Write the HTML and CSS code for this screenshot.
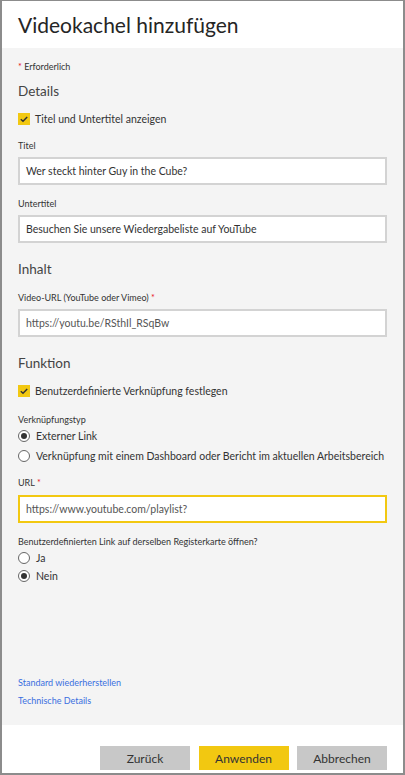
FILE: index.html
```html
<!DOCTYPE html>
<html lang="de">
<head>
<meta charset="utf-8">
<title>Videokachel hinzufügen</title>
<link rel="stylesheet" href="styles.css">
</head>
<body>
<div class="dialog">
  <header class="header">
    <h1 class="title">Videokachel hinzufügen</h1>
  </header>
  <main class="content">
    <div class="required"><span class="star">*</span> Erforderlich</div>

    <h2 class="section first">Details</h2>
    <label class="check">
      <span class="box"><svg viewBox="0 0 12 12" width="12" height="12"><path d="M2.8 6.2 L5 8.2 L9.2 4" fill="none" stroke="#333" stroke-width="1.5"/></svg></span>
      <span>Titel und Untertitel anzeigen</span>
    </label>
    <div class="label">Titel</div>
    <div class="field">Wer steckt hinter Guy in the Cube?</div>
    <div class="label">Untertitel</div>
    <div class="field">Besuchen Sie unsere Wiedergabeliste auf YouTube</div>

    <h2 class="section">Inhalt</h2>
    <div class="label">Video-URL (YouTube oder Vimeo) <span class="star">*</span></div>
    <div class="field url">https://youtu.be/RSthIl_RSqBw</div>

    <h2 class="section">Funktion</h2>
    <label class="check">
      <span class="box"><svg viewBox="0 0 12 12" width="12" height="12"><path d="M2.8 6.2 L5 8.2 L9.2 4" fill="none" stroke="#333" stroke-width="1.5"/></svg></span>
      <span>Benutzerdefinierte Verknüpfung festlegen</span>
    </label>
    <div class="label label-gap">Verknüpfungstyp</div>
    <div class="radio first-radio"><span class="circle on"></span><span>Externer Link</span></div>
    <div class="radio spaced"><span class="circle"></span><span>Verknüpfung mit einem Dashboard oder Bericht im aktuellen Arbeitsbereich</span></div>
    <div class="label">URL <span class="star">*</span></div>
    <div class="field url focus">https://www.youtube.com/playlist?</div>
    <div class="label">Benutzerdefinierten Link auf derselben Registerkarte öffnen?</div>
    <div class="radio first-radio"><span class="circle"></span><span>Ja</span></div>
    <div class="radio"><span class="circle on"></span><span>Nein</span></div>

    <div class="links">
      <a class="link" href="#">Standard wiederherstellen</a>
      <a class="link" href="#">Technische Details</a>
    </div>
  </main>
  <footer class="footer">
    <button class="btn">Zurück</button>
    <button class="btn primary">Anwenden</button>
    <button class="btn">Abbrechen</button>
  </footer>
</div>
</body>
</html>
```

FILE: styles.css
```css
* { box-sizing: border-box; }
html, body { margin: 0; padding: 0; }
body {
  font-family: "Lato", "Open Sans", sans-serif;
  color: #333;
  background: #fff;
}
.dialog {
  width: 405px;
  height: 775px;
  border: 2px solid #8c8c8c;
  border-top-width: 1px;
  display: flex;
  flex-direction: column;
  background: #fff;
}
.header {
  height: 47px;
  padding: 0 16px;
  display: flex;
  align-items: center;
  flex-shrink: 0;
}
.title {
  margin: 0;
  font-size: 21px;
  font-weight: 400;
  color: #252525;
  line-height: 28px;
}
.content {
  flex: 1;
  background: #f4f4f4;
  padding: 12px 16px 17px;
  display: flex;
  flex-direction: column;
  align-items: flex-start;
}
.required {
  font-size: 9px;
  line-height: 14px;
  height: 14px;
  color: #333;
}
.star { color: #e81123; }
.section {
  margin: 16px 0 0;
  font-size: 13.5px;
  font-weight: 400;
  line-height: 20px;
  height: 20px;
  color: #444;
}
.section.first { margin-top: 7px; }
.check {
  margin-top: 10px;
  height: 16px;
  display: flex;
  align-items: center;
  gap: 5px;
  font-size: 10.5px;
}
.box {
  width: 12px;
  height: 12px;
  background: #f2c811;
  display: flex;
}
.label {
  margin-top: 12px;
  height: 14px;
  line-height: 14px;
  font-size: 9px;
  color: #333;
}
.label-gap { margin-top: 14px; }
.field {
  margin-top: 4px;
  width: 100%;
  height: 28px;
  background: #fff;
  border: 2px solid #d3d3d3;
  padding: 0 6px;
  display: flex;
  align-items: center;
  font-size: 10.5px;
  color: #333;
}
.field.url { color: #555; }
.field.focus { border-color: #f2c811; margin-top: 5px; }
.radio {
  margin-top: 2px;
  height: 16px;
  display: flex;
  align-items: center;
  gap: 6px;
  font-size: 10.5px;
  white-space: nowrap;
}
.radio.first-radio { margin-top: 1px; }
.radio.spaced { margin-top: 4px; }
.circle {
  width: 12px;
  height: 12px;
  flex-shrink: 0;
  border-radius: 50%;
  border: 1px solid #666;
  background: #fff;
  display: flex;
  align-items: center;
  justify-content: center;
}
.circle.on::after {
  content: "";
  width: 6px;
  height: 6px;
  border-radius: 50%;
  background: #333;
}
.links {
  margin-top: auto;
  display: flex;
  flex-direction: column;
  gap: 4px;
}
.link {
  font-size: 9px;
  line-height: 14px;
  color: #3a6fe0;
  text-decoration: none;
}
.footer {
  height: 48px;
  flex-shrink: 0;
  display: flex;
  justify-content: flex-end;
  align-items: flex-start;
  gap: 8.5px;
  padding: 21px 16px 0;
}
.btn {
  width: 90px;
  height: 24px;
  border: 0;
  background: #c8c8c8;
  font-family: inherit;
  font-size: 12px;
  color: #333;
  padding: 0;
}
.btn.primary { background: #f2c811; }
```
